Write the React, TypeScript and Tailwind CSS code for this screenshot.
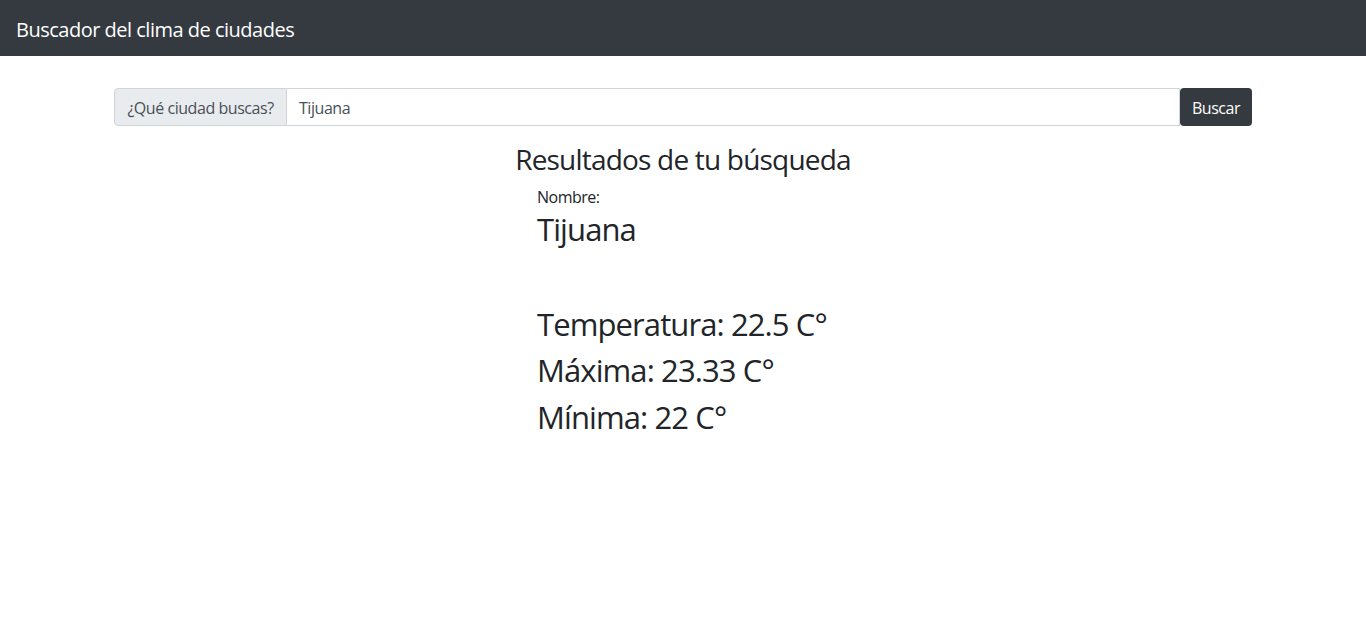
export default function App() {
  const font = { fontFamily: '"Open Sans", "Noto Sans", sans-serif' };

  return (
    <div className="min-h-screen bg-white text-[#212529]" style={font}>
      {/* Navbar */}
      <nav className="flex h-14 items-center bg-[#343a40] px-4 pt-1">
        <span className="text-[20px] leading-[30px] tracking-[-0.5px] text-white">Buscador del clima de ciudades</span>
      </nav>

      <div className="mx-auto w-[1138px] pt-8">
        {/* Search */}
        <div className="flex h-[38px] text-[16px] tracking-[-0.45px]">
          <span className="flex w-[173px] items-center justify-center rounded-l border border-[#ced4da] bg-[#e9ecef] pt-px text-[#495057]">
            ¿Qué ciudad buscas?
          </span>
          <input
            className="flex-1 border border-l-0 border-[#ced4da] px-3 pt-px text-[#495057] outline-none"
            defaultValue="Tijuana"
          />
          <button className="w-[72px] rounded bg-[#343a40] pt-px text-white">Buscar</button>
        </div>

        {/* Results */}
        <h3 className="mt-[17px] mb-2 text-center text-[28px] leading-[33.6px] tracking-[-0.8px]">
          Resultados de tu búsqueda
        </h3>
        <div className="pl-[423px]">
          <p className="text-[16px] leading-6 tracking-[-0.5px]">Nombre:</p>
          <h2 className="mt-[1px] text-[31px] leading-[38.4px] tracking-[-0.9px]">Tijuana</h2>
          <div className="mt-[57px] flex flex-col gap-2 text-[31px] leading-[38.4px] tracking-[-0.9px]">
            <h2>Temperatura: 22.5 C°</h2>
            <h2>Máxima: 23.33 C°</h2>
            <h2>Mínima: 22 C°</h2>
          </div>
        </div>
      </div>
    </div>
  );
}
